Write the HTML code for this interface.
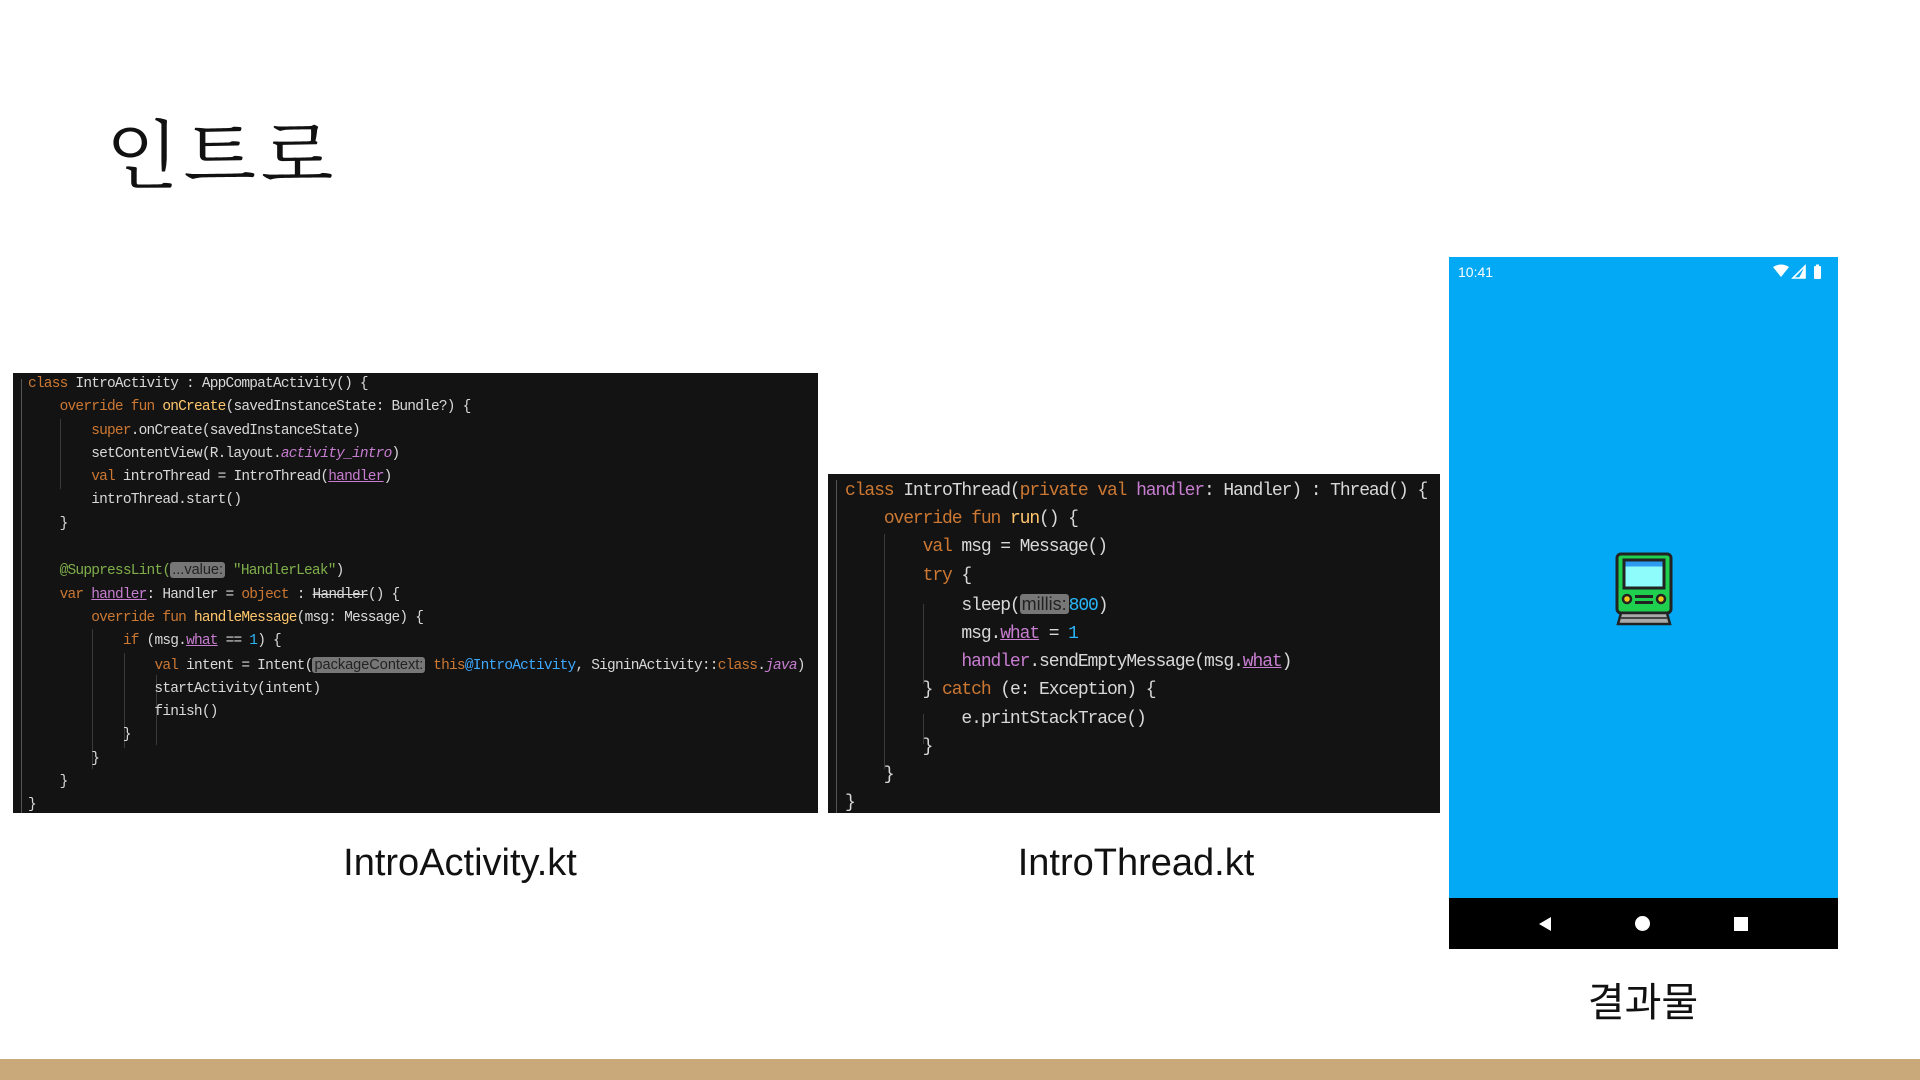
<!DOCTYPE html>
<html><head><meta charset="utf-8"><style>
body{margin:0;width:1920px;height:1080px;background:#fff;position:relative;overflow:hidden;font-family:"Liberation Sans","Noto Sans CJK KR",sans-serif}
.title{position:absolute;left:106px;top:108px;font-family:"Liberation Serif","Noto Serif CJK SC",serif;font-size:75px;line-height:100px;color:#111;letter-spacing:5px}
.panel{position:absolute;background:#131313;color:#d8d8d8;font-family:"Liberation Mono",monospace;white-space:pre;overflow:hidden}
#p1{left:13px;top:373px;width:805px;height:440px}
#p2{left:828px;top:474px;width:612px;height:339px}
#p1 .code{position:absolute;left:15px;top:0;font-size:14.5px;line-height:23.3px;letter-spacing:-0.8px}
#p2 .code{position:absolute;left:17px;top:3px;font-size:18px;line-height:28.2px;letter-spacing:-1.1px}
.gut{position:absolute;left:8px;top:6px;bottom:0;width:1px;background:#555}
.k{color:#cc7832}.f{color:#ffc66d}.p{color:#c77dd0}.u{color:#c77dd0;text-decoration:underline}.s{color:#7fae4a}.n{color:#29b6f6}.b{color:#3ea8ff}.i{color:#c77dd0;font-style:italic}
.h{background:#777;color:#222;border-radius:3px;padding:0 2px;font-family:"Liberation Sans",sans-serif;letter-spacing:0}
.ind{position:absolute;width:1px;background:#3a3a3a}
.cap{position:absolute;font-size:38px;color:#111;transform:translateX(-50%);white-space:nowrap}
#phone{position:absolute;left:1449px;top:257px;width:389px;height:692px;background:#03a9f4}
#nav{position:absolute;left:0;bottom:0;width:389px;height:51px;background:#000}
#bar{position:absolute;left:0;top:1059px;width:1920px;height:21px;background:#c9a97a}
</style></head><body>
<div class="title">인트로</div>

<div class="panel" id="p1"><div class="gut"></div>
<div class="ind" style="left:47px;top:46px;height:70px"></div>
<div class="ind" style="left:79px;top:256px;height:140px"></div>
<div class="ind" style="left:111px;top:280px;height:95px"></div>
<div class="ind" style="left:143px;top:302px;height:70px"></div>
<div class="code"><span class="k">class</span> IntroActivity : AppCompatActivity() {
    <span class="k">override fun</span> <span class="f">onCreate</span>(savedInstanceState: Bundle?) {
        <span class="k">super</span>.onCreate(savedInstanceState)
        setContentView(R.layout.<span class="i">activity_intro</span>)
        <span class="k">val</span> introThread = IntroThread(<span class="u">handler</span>)
        introThread.start()
    }

    <span class="s">@SuppressLint(</span><span class="h">...value:</span> <span class="s">"HandlerLeak"</span>)
    <span class="k">var</span> <span class="u">handler</span>: Handler = <span class="k">object</span> : <s>Handler</s>() {
        <span class="k">override fun</span> <span class="f">handleMessage</span>(msg: Message) {
            <span class="k">if</span> (msg.<span class="u">what</span> == <span class="n">1</span>) {
                <span class="k">val</span> intent = Intent(<span class="h">packageContext:</span> <span class="k">this</span><span class="b">@IntroActivity</span>, SigninActivity::<span class="k">class</span>.<span class="i">java</span>)
                startActivity(intent)
                finish()
            }
        }
    }
}</div></div>

<div class="panel" id="p2"><div class="gut"></div>
<div class="ind" style="left:56px;top:60px;height:235px"></div>
<div class="ind" style="left:95px;top:130px;height:80px"></div>
<div class="ind" style="left:95px;top:240px;height:30px"></div>
<div class="code"><span class="k">class</span> IntroThread(<span class="k">private val</span> <span class="p">handler</span>: Handler) : Thread() {
    <span class="k">override fun</span> <span class="f">run</span>() {
        <span class="k">val</span> msg = Message()
        <span class="k">try</span> {
            sleep(<span class="h">millis:</span><span class="n">800</span>)
            msg.<span class="u">what</span> = <span class="n">1</span>
            <span class="p">handler</span>.sendEmptyMessage(msg.<span class="u">what</span>)
        } <span class="k">catch</span> (e: Exception) {
            e.printStackTrace()
        }
    }
}</div></div>

<div class="cap" style="left:460px;top:842px">IntroActivity.kt</div>
<div class="cap" style="left:1136px;top:842px">IntroThread.kt</div>
<div class="cap" style="left:1643px;top:970px;font-size:40px">결과물</div>

<div id="phone">
<div style="position:absolute;left:9px;top:7px;color:#fff;font-size:14px">10:41</div>
<svg style="position:absolute;right:10px;top:7px" width="56" height="16" viewBox="0 0 56 16">
<path d="M1 3 Q9 -2 17 3 L9 13 Z" fill="#fff"/>
<path d="M33 2 L33 14 L21 14 Z" fill="none" stroke="#fff" stroke-width="1.6"/>
<path d="M33 2 L33 14 L27 14 Z" fill="#fff"/>
<rect x="42" y="2" width="7" height="13" rx="1" fill="#fff"/><rect x="44" y="0.5" width="3" height="2" fill="#fff"/>
</svg>
<svg style="position:absolute;left:166px;top:295px" width="58" height="74" viewBox="0 0 58 74">
<rect x="2" y="2" width="54" height="59" rx="4" fill="#1fd04f" stroke="#222" stroke-width="3"/>
<rect x="9" y="8" width="40" height="28" fill="#8ffcfc" stroke="#222" stroke-width="3"/>
<rect x="10.5" y="9.5" width="37" height="5" fill="#2d9cf0"/>
<circle cx="12" cy="47" r="4" fill="#f5c518" stroke="#222" stroke-width="2.5"/>
<circle cx="46" cy="47" r="4" fill="#f5c518" stroke="#222" stroke-width="2.5"/>
<rect x="20" y="43" width="18" height="3" fill="#222"/><rect x="20" y="49" width="18" height="3" fill="#222"/>
<path d="M6 61 L52 61 L55 72 L3 72 Z" fill="#aaa" stroke="#222" stroke-width="2.5"/>
<rect x="6" y="65" width="46" height="2" fill="#444"/>
</svg>
<div id="nav">
<svg style="position:absolute;left:88px;top:18px" width="16" height="16"><path d="M2 8 L14 1 L14 15 Z" fill="#fff"/></svg>
<div style="position:absolute;left:186px;top:18px;width:15px;height:15px;border-radius:50%;background:#fff"></div>
<div style="position:absolute;left:285px;top:19px;width:14px;height:14px;background:#fff"></div>
</div>
</div>
<div id="bar"></div>
</body></html>
